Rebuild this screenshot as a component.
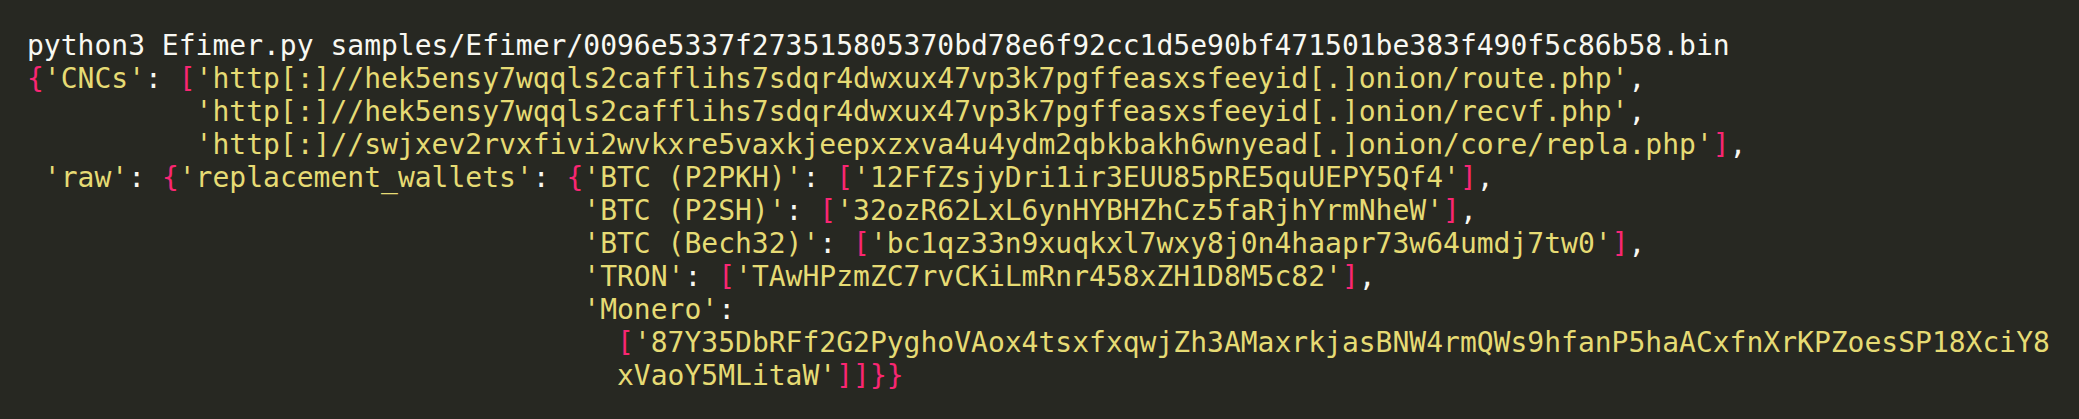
const W = 'text-[#f8f8f2]';
const Y = 'text-[#e6db74]';
const P = 'text-[#f92672]';

type Seg = [string, string];

const lines: Seg[][] = [
  [[W, 'python3 Efimer.py samples/Efimer/0096e5337f273515805370bd78e6f92cc1d5e90bf471501be383f490f5c86b58.bin']],
  [
    [P, '{'],
    [Y, "'CNCs'"],
    [W, ': '],
    [P, '['],
    [Y, "'http[:]//hek5ensy7wqqls2cafflihs7sdqr4dwxux47vp3k7pgffeasxsfeeyid[.]onion/route.php'"],
    [W, ','],
  ],
  [
    [W, '          '],
    [Y, "'http[:]//hek5ensy7wqqls2cafflihs7sdqr4dwxux47vp3k7pgffeasxsfeeyid[.]onion/recvf.php'"],
    [W, ','],
  ],
  [
    [W, '          '],
    [Y, "'http[:]//swjxev2rvxfivi2wvkxre5vaxkjeepxzxva4u4ydm2qbkbakh6wnyead[.]onion/core/repla.php'"],
    [P, ']'],
    [W, ','],
  ],
  [
    [W, ' '],
    [Y, "'raw'"],
    [W, ': '],
    [P, '{'],
    [Y, "'replacement_wallets'"],
    [W, ': '],
    [P, '{'],
    [Y, "'BTC (P2PKH)'"],
    [W, ': '],
    [P, '['],
    [Y, "'12FfZsjyDri1ir3EUU85pRE5quUEPY5Qf4'"],
    [P, ']'],
    [W, ','],
  ],
  [
    [W, ' '.repeat(33)],
    [Y, "'BTC (P2SH)'"],
    [W, ': '],
    [P, '['],
    [Y, "'32ozR62LxL6ynHYBHZhCz5faRjhYrmNheW'"],
    [P, ']'],
    [W, ','],
  ],
  [
    [W, ' '.repeat(33)],
    [Y, "'BTC (Bech32)'"],
    [W, ': '],
    [P, '['],
    [Y, "'bc1qz33n9xuqkxl7wxy8j0n4haapr73w64umdj7tw0'"],
    [P, ']'],
    [W, ','],
  ],
  [
    [W, ' '.repeat(33)],
    [Y, "'TRON'"],
    [W, ': '],
    [P, '['],
    [Y, "'TAwHPzmZC7rvCKiLmRnr458xZH1D8M5c82'"],
    [P, ']'],
    [W, ','],
  ],
  [
    [W, ' '.repeat(33)],
    [Y, "'Monero'"],
    [W, ':'],
  ],
  [
    [W, ' '.repeat(35)],
    [P, '['],
    [Y, "'87Y35DbRFf2G2PyghoVAox4tsxfxqwjZh3AMaxrkjasBNW4rmQWs9hfanP5haACxfnXrKPZoesSP18XciY8"],
  ],
  [
    [W, ' '.repeat(35)],
    [Y, "xVaoY5MLitaW'"],
    [P, ']]}}'],
  ],
];

export default function App() {
  return (
    <div className="w-[2079px] h-[419px] bg-[#272822] pt-[29px] pl-[27px] overflow-hidden">
      <div className="font-['DejaVu_Sans_Mono',monospace] text-[28px] leading-[33px] whitespace-pre">
        {lines.map((segs, i) => (
          <div key={i}>
            {segs.map(([cls, text], j) => (
              <span key={j} className={cls}>
                {text}
              </span>
            ))}
          </div>
        ))}
      </div>
    </div>
  );
}
